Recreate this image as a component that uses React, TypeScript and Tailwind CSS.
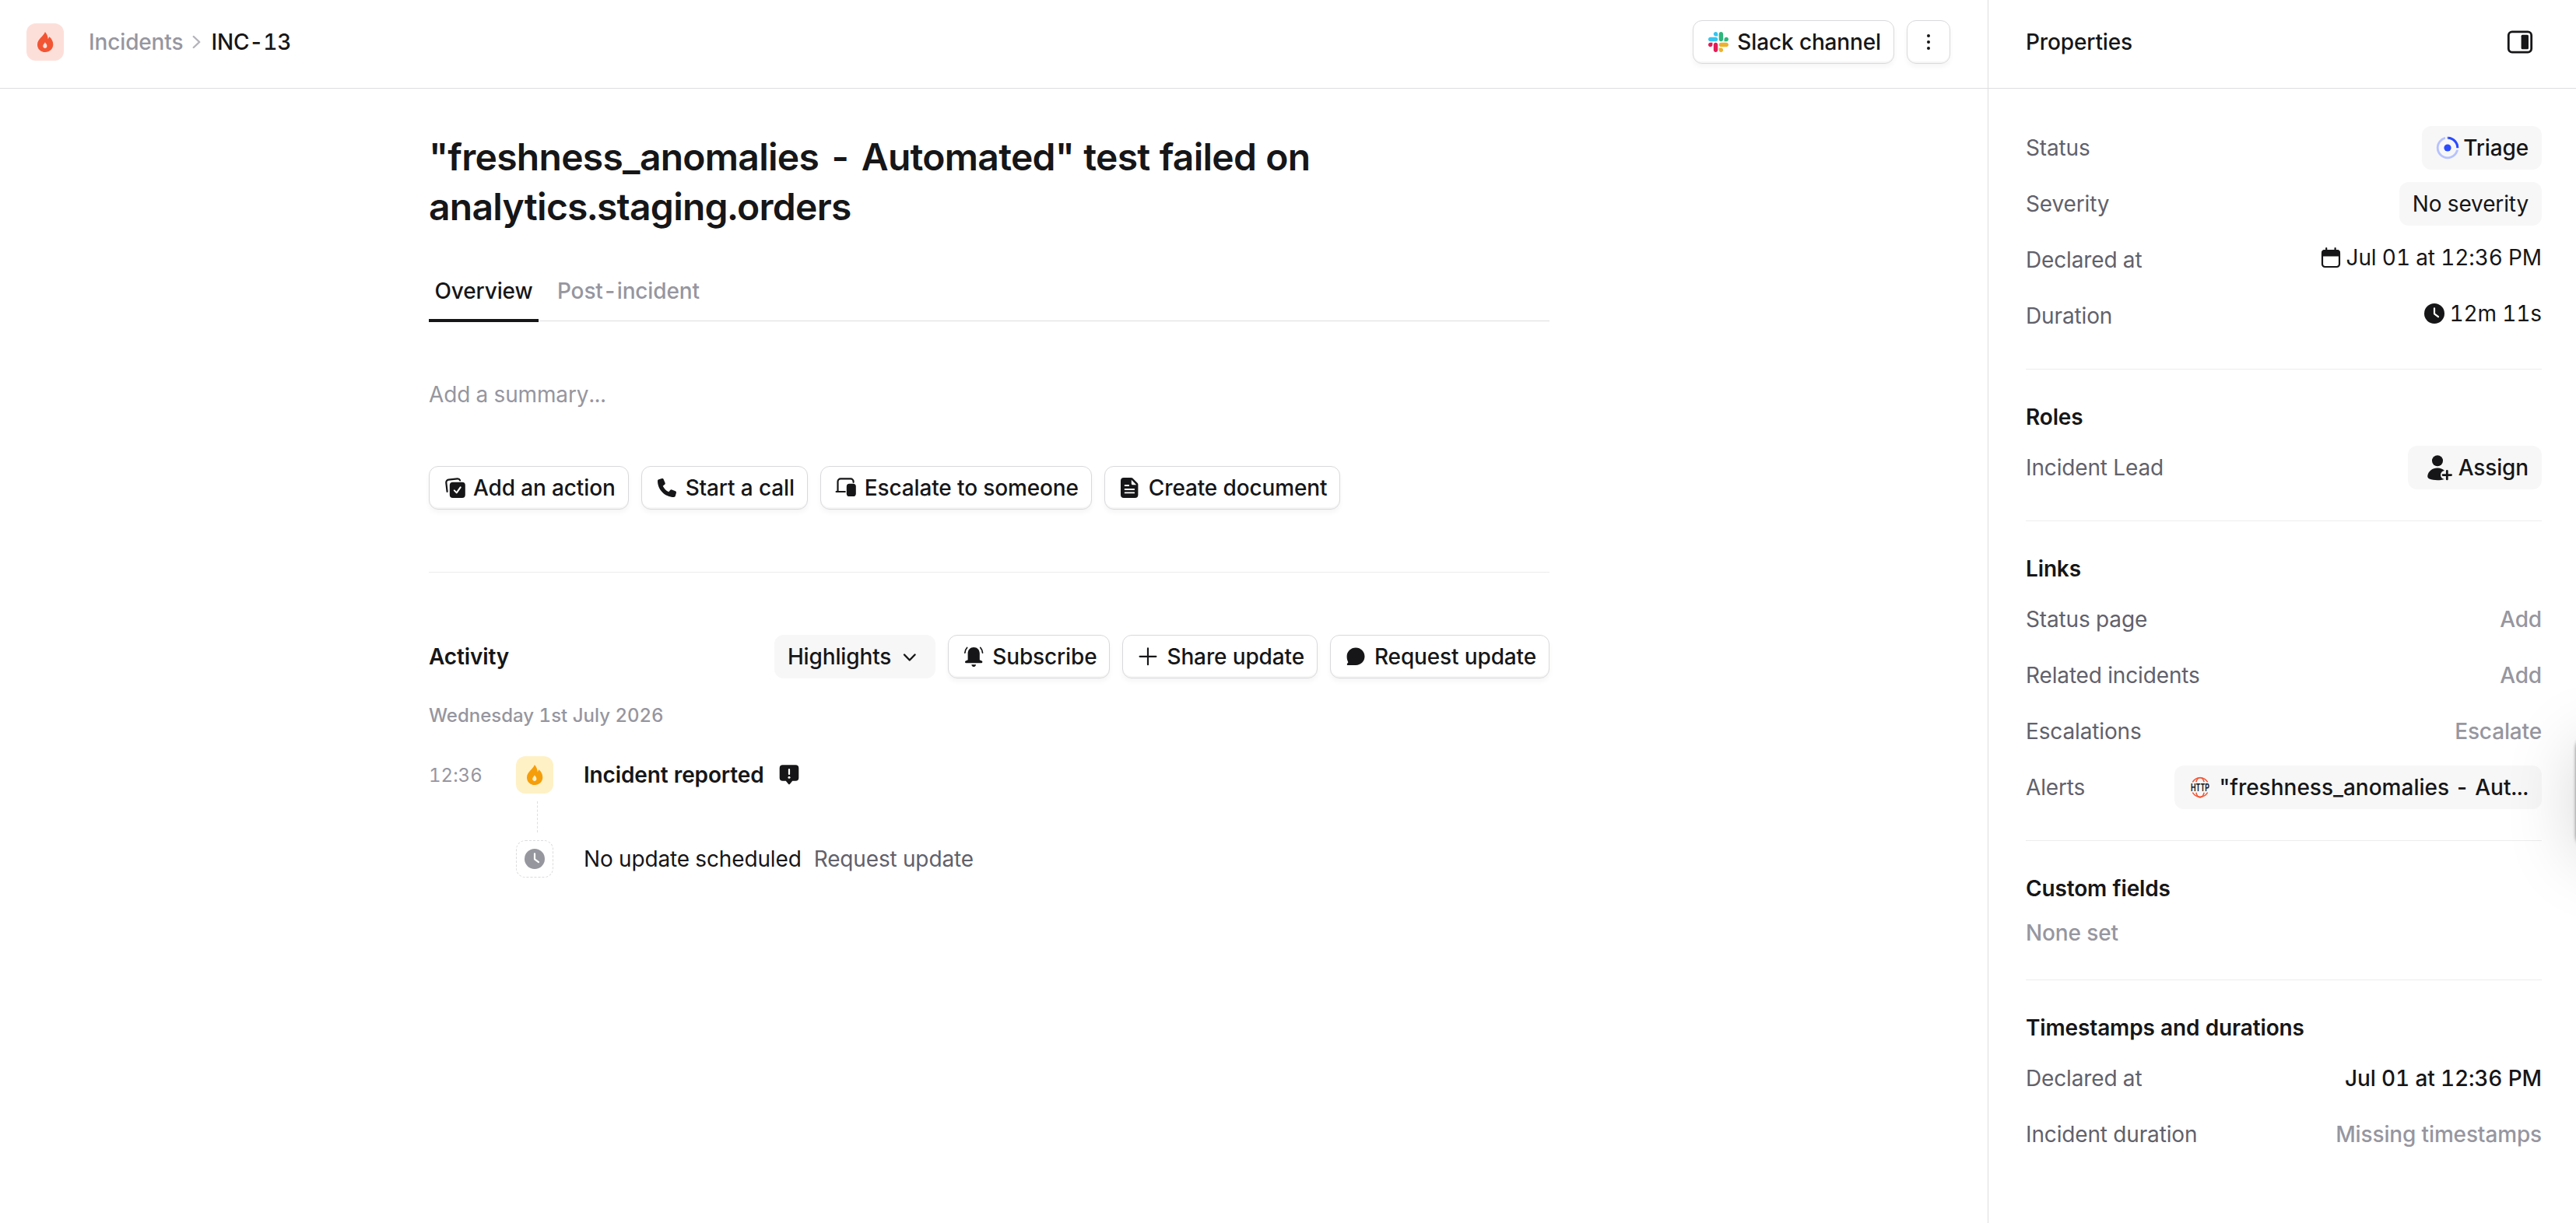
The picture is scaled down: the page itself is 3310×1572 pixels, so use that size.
import type { ReactNode } from "react";
import { FaPhone } from "react-icons/fa6";
import { cx } from "class-variance-authority";

type IconProps = { className?: string };

const Icon = ({
	className = "size-8",
	box = 32,
	children,
}: IconProps & { box?: number; children: ReactNode }) => (
	<svg
		viewBox={`0 0 ${box} ${box}`}
		fill="none"
		className={cx("shrink-0", className)}
	>
		{children}
	</svg>
);

const FlameIcon = ({ className }: IconProps) => (
	<Icon className={className}>
		<path
			fill="currentColor"
			fillRule="evenodd"
			d="M15.9 3C14.2 8.4 6 12.2 6 19.4 6 24.8 10.4 29 16.1 29s10.2-4.2 10.2-9.7c0-4.200-1.900-7.300-4.800-10-.8.9-1.400 2-1.700 3.300C19.500 8.700 18.200 5.200 15.900 3Zm0 13.200c-.5 1.700-2.700 2.900-2.700 5.100 0 1.500 1.100 2.600 2.600 2.600s2.600-1.100 2.600-2.700c0-2.100-1.500-3.300-2.500-5Z"
		/>
	</Icon>
);

const SlackIcon = () => (
	<Icon box={122.8} className="size-[26px] mx-[3px]">
		<path
			fill="#e01e5a"
			d="M25.800 77.600c0 7.100-5.800 12.900-12.900 12.900S0 84.700 0 77.600s5.800-12.900 12.900-12.900h12.900v12.900zM32.300 77.600c0-7.100 5.800-12.900 12.900-12.900s12.900 5.800 12.900 12.900v32.300c0 7.100-5.800 12.900-12.900 12.900s-12.900-5.800-12.900-12.900V77.600z"
		/>
		<path
			fill="#36c5f0"
			d="M45.200 25.800c-7.100 0-12.900-5.800-12.900-12.900S38.100 0 45.200 0s12.900 5.800 12.900 12.900v12.900H45.200zM45.200 32.300c7.100 0 12.900 5.800 12.900 12.900s-5.800 12.900-12.900 12.900H12.900C5.800 58.100 0 52.300 0 45.200s5.800-12.900 12.900-12.900h32.300z"
		/>
		<path
			fill="#2eb67d"
			d="M97 45.200c0-7.100 5.800-12.900 12.900-12.900s12.900 5.800 12.900 12.900-5.800 12.900-12.900 12.900H97V45.200zM90.500 45.200c0 7.100-5.800 12.900-12.900 12.900s-12.900-5.800-12.900-12.900V12.900C64.700 5.800 70.500 0 77.600 0s12.900 5.800 12.900 12.900v32.300z"
		/>
		<path
			fill="#ecb22e"
			d="M77.600 97c7.100 0 12.900 5.800 12.900 12.900s-5.800 12.900-12.900 12.900-12.900-5.800-12.900-12.900V97h12.900zM77.600 90.500c-7.100 0-12.900-5.800-12.900-12.900s5.800-12.900 12.900-12.900h32.300c7.100 0 12.900 5.800 12.900 12.900s-5.800 12.900-12.900 12.900H77.600z"
		/>
	</Icon>
);

const DotsIcon = () => (
	<Icon>
		<circle cx="16" cy="8" r="2" fill="currentColor" />
		<circle cx="16" cy="16" r="2" fill="currentColor" />
		<circle cx="16" cy="24" r="2" fill="currentColor" />
	</Icon>
);

const PanelIcon = () => (
	<Icon box={36} className="size-9">
		<rect x="3.300" y="4.900" width="29.400" height="26.200" rx="4.500" stroke="currentColor" strokeWidth="2.800" />
		<rect x="19.600" y="8.700" width="9.400" height="18.600" rx="1.500" fill="currentColor" />
	</Icon>
);

const ActionIcon = () => (
	<Icon>
		<path
			d="M6.600 20.800 5.300 9.400a3.400 3.400 0 0 1 3-3.700l11.300-1.300a3.400 3.400 0 0 1 3.500 2"
			stroke="currentColor"
			strokeWidth="2.200"
			strokeLinecap="round"
		/>
		<rect x="9.800" y="8.800" width="20" height="20.200" rx="4" fill="currentColor" />
		<path
			d="m15.800 19.400 2.900 3 5-7"
			stroke="#fff"
			strokeWidth="2"
			strokeLinecap="round"
			strokeLinejoin="round"
		/>
	</Icon>
);

const EscalateIcon = () => (
	<Icon>
		<path
			d="M3.600 21H14.800M5.500 21V8A3.600 3.600 0 0 1 9.100 4.400H22a3.600 3.600 0 0 1 3.600 3.600v.8"
			stroke="currentColor"
			strokeWidth="2.200"
			strokeLinecap="round"
		/>
		<rect x="16.800" y="10.800" width="12" height="16.200" rx="3.600" fill="currentColor" />
	</Icon>
);

const DocumentIcon = () => (
	<Icon>
		<path
			fill="currentColor"
			d="M8 3h9.500c.8 0 1.500.3 2 .8l6 6c.6.6.9 1.300.9 2V25a4 4 0 0 1-4 4H8a4 4 0 0 1-4-4V7a4 4 0 0 1 4-4Z"
		/>
		<path d="M17.800 5.800v4.700c0 1 .7 1.800 1.800 1.800h4.600Z" fill="#fff" />
		<path
			d="M9.600 13h4.600M9.600 18h11.600M9.600 22.400h11.600"
			stroke="#fff"
			strokeWidth="1.800"
			strokeLinecap="round"
		/>
	</Icon>
);

const BellIcon = () => (
	<Icon>
		<path
			fill="currentColor"
			d="M16.200 4c4.500 0 7.600 3.300 7.600 7.800v8.400l2.800 1.400c1.300.7 1 2.700-.6 2.700H6.400c-1.600 0-1.900-2-.6-2.700l2.800-1.400v-8.400C8.600 7.300 11.700 4 16.200 4ZM13.300 26.200h5.800c-.3 1.700-1.400 2.900-2.900 2.900s-2.600-1.200-2.900-2.900Z"
		/>
		<path
			d="M4.900 11c.2-2.700 1.100-4.800 2.700-6.500M27.500 11c-.2-2.700-1.100-4.800-2.700-6.500"
			stroke="currentColor"
			strokeWidth="1.800"
			strokeLinecap="round"
		/>
	</Icon>
);

const PlusIcon = () => (
	<Icon>
		<path d="M5.600 15.800h20.800M16 5.400v20.800" stroke="currentColor" strokeWidth="2.200" strokeLinecap="round" />
	</Icon>
);

const ChatIcon = () => (
	<Icon>
		<path
			fill="currentColor"
			d="M16.100 4.600c6.400 0 11.400 4.900 11.400 11.200S22.500 27 16.100 27H6.100c-1.300 0-1.700-1.200-1-2.100l1.300-1.700c-1.200-2-1.800-4.400-1.800-7.400 0-6.300 5.100-11.200 11.500-11.200Z"
		/>
	</Icon>
);

const ChevronDownIcon = () => (
	<Icon>
		<path
			d="m9 13.500 6.800 7 6.800-7"
			stroke="currentColor"
			strokeWidth="2.400"
			strokeLinecap="round"
			strokeLinejoin="round"
		/>
	</Icon>
);

const CommentAlertIcon = () => (
	<Icon>
		<path
			fill="currentColor"
			d="M7.700 3.300h16.600a4 4 0 0 1 4 4v12.400a4 4 0 0 1-4 4h-4.100l-3 3.900a1.500 1.500 0 0 1-2.400 0l-3-3.900H7.700a4 4 0 0 1-4-4V7.300a4 4 0 0 1 4-4Z"
		/>
		<path d="M16 9v6" stroke="#fff" strokeWidth="2.200" strokeLinecap="round" />
		<circle cx="16" cy="19.300" r="1.500" fill="#fff" />
	</Icon>
);

const ClockIcon = () => (
	<Icon>
		<circle cx="16" cy="16" r="13" fill="currentColor" />
		<path
			d="M16 9.300v7l5 3.800"
			stroke="#fff"
			strokeWidth="2.200"
			strokeLinecap="round"
			strokeLinejoin="round"
		/>
	</Icon>
);

const CalendarIcon = () => (
	<Icon>
		<rect x="5" y="7" width="22" height="21" rx="3.400" stroke="currentColor" strokeWidth="2.200" />
		<path d="M4 10a4 4 0 0 1 4-4h16a4 4 0 0 1 4 4v4.600H4Z" fill="currentColor" />
		<path d="M10.200 4v4M21.600 4v4" stroke="currentColor" strokeWidth="2.200" strokeLinecap="round" />
	</Icon>
);

const TriageIcon = () => (
	<Icon>
		<circle cx="16" cy="16" r="12.800" stroke="#b6c2ff" strokeWidth="2.800" />
		<path d="M14 1v6M25 17.800h6" stroke="#f7f7f7" strokeWidth="2" />
		<path d="M16.400 3.200A12.800 12.800 0 0 1 28.800 16" stroke="#2b4bff" strokeWidth="3" />
		<circle cx="16" cy="16" r="4.600" fill="#2b4bff" />
	</Icon>
);

const AssignIcon = () => (
	<Icon box={40} className="size-10">
		<circle cx="21" cy="11.200" r="7" fill="currentColor" />
		<path
			fill="currentColor"
			d="M21 20.600c3.600 0 6.800 1.300 9 3.500-3 .3-5 2.600-5 5.400 0 2.900 2 5 4.800 5.500-2.600.9-5.500 1.300-8.800 1.300-4.100 0-7.500-.5-10.400-1.700C8.700 33.800 8 32.200 8.300 30.300 9.300 24.600 14.600 20.600 21 20.600Z"
		/>
		<path d="M28 29.600h10.600M33.300 24.300v10.600" stroke="currentColor" strokeWidth="2.800" strokeLinecap="round" />
	</Icon>
);

const HttpIcon = () => (
	<Icon className="size-8 overflow-visible">
		<g stroke="#f25533" strokeWidth="1.500">
			<path d="M6.300 9.300A11.800 12.800 0 0 1 25.700 9.300M6.300 22.700A11.800 12.800 0 0 0 25.700 22.700" />
			<path d="M10.800 9.300c1-3.500 3-5.700 5.200-5.700s4.200 2.200 5.200 5.700M10.800 22.700c1 3.700 3 6.200 5.200 6.200s4.200-2.500 5.200-6.200" />
		</g>
		<text
			x="16"
			y="20.800"
			textAnchor="middle"
			textLength="24"
			lengthAdjust="spacingAndGlyphs"
			fill="#161618"
			fontSize="13"
			fontWeight="700"
		>
			HTTP
		</text>
	</Icon>
);

const Button = ({ icon, children }: { icon: ReactNode; children: ReactNode }) => (
	<button
		type="button"
		className="h-14 flex items-center gap-2 px-4 rounded-xl border border-[#d9d9dc] bg-white font-medium whitespace-nowrap shadow-[inset_0_-2px_0_rgba(0,0,0,0.035),0_4px_6px_rgba(0,0,0,0.04)]"
	>
		{icon}
		{children}
	</button>
);

const Pill = ({ className, children }: { className?: string; children: ReactNode }) => (
	<div className={cx("h-14 flex items-center px-[17px] rounded-xl bg-[#f7f7f7] whitespace-nowrap", className)}>
		{children}
	</div>
);

const Property = ({ label, children }: { label: string; children: ReactNode }) => (
	<div className="h-14 flex items-center justify-between">
		<span className="text-[#61616b]">{label}</span>
		{children}
	</div>
);

const Section = ({ title, children }: { title: string; children: ReactNode }) => (
	<section className="mt-10 pt-10 border-t border-[#ededee] flex flex-col gap-4">
		<h3 className="font-semibold h-[42px] leading-[42px]">{title}</h3>
		{children}
	</section>
);

const Muted = ({ children }: { children: ReactNode }) => (
	<span className="font-medium text-[#96969f]">{children}</span>
);

const Header = () => (
	<header className="h-[114px] pb-[5px] border-b border-[#dedee0] flex items-center justify-between pl-[34px] pr-12">
		<div className="flex items-center font-medium">
			<div className="size-12 rounded-xl bg-[#fddfda] text-[#f25533] flex items-center justify-center">
				<FlameIcon />
			</div>
			<span className="ml-8 text-[#96969f]">Incidents</span>
			<Icon className="w-9 h-8">
				<path
					d="m11.800 9 7.400 7-7.400 7"
					stroke="#b4b4ba"
					strokeWidth="2.400"
					strokeLinecap="round"
					strokeLinejoin="round"
				/>
			</Icon>
			<span>INC-13</span>
		</div>
		<div className="flex gap-4">
			<Button icon={<SlackIcon />}>Slack channel</Button>
			<button
				type="button"
				className="size-14 flex items-center justify-center rounded-xl border border-[#d9d9dc] shadow-[inset_0_-2px_0_rgba(0,0,0,0.035),0_4px_6px_rgba(0,0,0,0.04)]"
			>
				<DotsIcon />
			</button>
		</div>
	</header>
);

const Activity = () => (
	<section className="pt-20">
		<div className="flex items-center justify-between">
			<h2 className="font-semibold">Activity</h2>
			<div className="flex gap-4">
				<Pill className="gap-2 px-4 font-medium">
					Highlights
					<ChevronDownIcon />
				</Pill>
				<Button icon={<BellIcon />}>Subscribe</Button>
				<Button icon={<PlusIcon />}>Share update</Button>
				<Button icon={<ChatIcon />}>Request update</Button>
			</div>
		</div>
		<p className="mt-8 h-8 leading-8 text-[24px] font-medium tracking-normal text-[#96969f]">
			Wednesday 1st July 2026
		</p>
		<div className="mt-9 h-12 flex items-center">
			<span className="w-28 pt-0.5 text-[24px] tracking-normal text-[#96969f]">12:36</span>
			<div className="size-12 rounded-xl bg-[#fff1c6] text-[#f59e0b] flex items-center justify-center">
				<FlameIcon />
			</div>
			<span className="ml-[39px] font-semibold">Incident reported</span>
			<div className="ml-4">
				<CommentAlertIcon />
			</div>
		</div>
		<div className="ml-[139px] my-[10px] h-10 border-l border-dashed border-[#dedee0]" />
		<div className="ml-28 h-12 flex items-center">
			<div className="size-12 rounded-xl border border-dashed border-[#dcdcde] text-[#96969f] flex items-center justify-center">
				<ClockIcon />
			</div>
			<span className="ml-[39px]">No update scheduled</span>
			<span className="ml-4 text-[#61616b]">Request update</span>
		</div>
	</section>
);

const Main = () => (
	<div className="flex-1 pr-3">
		<div className="w-[1440px] mx-auto pt-14">
			<h1 className="text-[48px] leading-[64px] font-semibold tracking-[-0.73px]">
				"freshness_anomalies - Automated" test failed on
				<br />
				analytics.staging.orders
			</h1>
			<div className="mt-[42px] h-[73px] flex gap-4 border-b border-[#dedee0] font-medium">
				<div className="h-[74px] px-[7.500px] pt-[13px] border-b-4 border-[#161618]">Overview</div>
				<div className="px-2 pt-[13px] text-[#96969f]">Post-incident</div>
			</div>
			<p className="mt-[73px] h-[42px] leading-[42px] text-[#96969f]">Add a summary...</p>
			<div className="mt-[71px] pb-20 border-b border-[#ededee] flex gap-4">
				<Button icon={<ActionIcon />}>Add an action</Button>
				<Button icon={<FaPhone className="size-6 mx-1" />}>Start a call</Button>
				<Button icon={<EscalateIcon />}>Escalate to someone</Button>
				<Button icon={<DocumentIcon />}>Create document</Button>
			</div>
			<Activity />
		</div>
	</div>
);

const Sidebar = () => (
	<aside className="w-[756px] border-l border-[#dedee0]">
		<div className="h-[114px] pb-[5px] pl-12 pr-[54px] flex items-center justify-between border-b border-[#dedee0]">
			<span className="font-medium">Properties</span>
			<PanelIcon />
		</div>
		<div className="pt-12 pl-12 pr-11">
			<div className="flex flex-col gap-4">
				<Property label="Status">
					<Pill className="gap-1 font-medium">
						<TriageIcon />
						Triage
					</Pill>
				</Property>
				<Property label="Severity">
					<Pill>No severity</Pill>
				</Property>
				<Property label="Declared at">
					<span className="flex items-center gap-1 pb-1.5">
						<CalendarIcon />
						Jul 01 at 12:36 PM
					</span>
				</Property>
				<Property label="Duration">
					<span className="flex items-center gap-1 pb-1.5">
						<ClockIcon />
						12m 11s
					</span>
				</Property>
			</div>
			<Section title="Roles">
				<Property label="Incident Lead">
					<Pill className="gap-2 font-medium">
						<AssignIcon />
						Assign
					</Pill>
				</Property>
			</Section>
			<Section title="Links">
				<Property label="Status page">
					<Muted>Add</Muted>
				</Property>
				<Property label="Related incidents">
					<Muted>Add</Muted>
				</Property>
				<Property label="Escalations">
					<Muted>Escalate</Muted>
				</Property>
				<Property label="Alerts">
					<Pill className="gap-2 font-medium tracking-normal">
						<HttpIcon />
						"freshness_anomalies - Aut...
					</Pill>
				</Property>
			</Section>
			<Section title="Custom fields">
				<p className="h-10 leading-10">
					<Muted>None set</Muted>
				</p>
			</Section>
			<Section title="Timestamps and durations">
				<Property label="Declared at">
					<span className="font-medium">Jul 01 at 12:36 PM</span>
				</Property>
				<Property label="Incident duration">
					<Muted>Missing timestamps</Muted>
				</Property>
			</Section>
		</div>
	</aside>
);

export default function App() {
	return (
		<div className="relative w-[3310px] h-[1572px] overflow-hidden flex bg-white text-[#161618] text-[28px] leading-[42px] tracking-[-0.14px] tabular-nums [font-feature-settings:'calt'_0] font-['Inter',sans-serif]">
			<div className="flex-1 flex flex-col">
				<Header />
				<Main />
			</div>
			<Sidebar />
			{/* docked widget, collapsed past the right edge */}
			<div className="absolute left-full top-[946px] w-24 h-[144px] rounded-2xl shadow-[0_0_4px_rgba(0,0,0,0.5),0_12px_90px_rgba(0,0,0,0.17)]" />
		</div>
	);
}
